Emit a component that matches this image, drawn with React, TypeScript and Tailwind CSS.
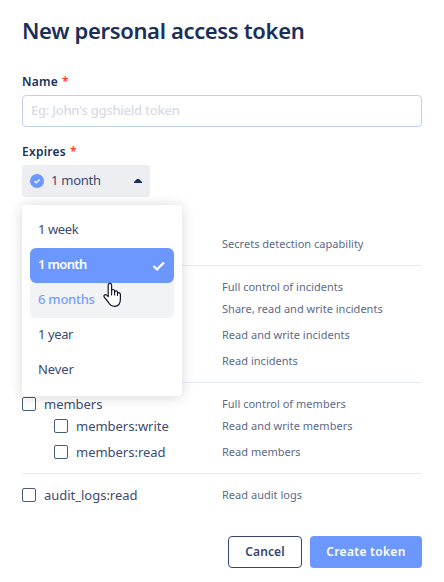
import React from "react";

type Scope = { name?: string; description: string; child?: boolean };

const sections: Scope[][] = [
  [{ description: "Secrets detection capability" }],
  [
    { description: "Full control of incidents" },
    { description: "Share, read and write incidents", child: true },
    { description: "Read and write incidents", child: true },
    { description: "Read incidents", child: true },
  ],
  [
    { name: "members", description: "Full control of members" },
    { name: "members:write", description: "Read and write members", child: true },
    { name: "members:read", description: "Read members", child: true },
  ],
  [{ name: "audit_logs:read", description: "Read audit logs" }],
];

function ScopeRow({ name, description, child }: Scope) {
  return (
    <div className={`flex items-center ${child ? "h-[26px] pl-8" : "h-[18px]"}`}>
      <div className={`flex items-center gap-2 ${child ? "w-[168px]" : "w-[200px]"}`}>
        {name && (
          <>
            <span className="size-[14px] shrink-0 rounded-[2px] border border-[#4a5a80] bg-white" />
            <span className="pb-px text-[13px] leading-[18px] tracking-[-0.02px] text-[#3c4b70]">{name}</span>
          </>
        )}
      </div>
      <span className="whitespace-nowrap text-[11px] leading-[18px] tracking-[0.02px] text-[#5d6a8a]">{description}</span>
    </div>
  );
}

function Option({ label, className = "" }: { label: string; className?: string }) {
  return (
    <div className={`flex h-[35px] items-center rounded-md px-2 pb-[2px] text-[13px] ${className}`}>
      {label}
    </div>
  );
}

function HandCursor() {
  return (
    <svg className="absolute left-[103px] top-[282px] z-20" width="19" height="26" viewBox="0 0 19 26">
      <path
        d="M5.2 14V3.2C5.2 .7 8.6 .7 8.6 3.2V9.5V8.3C9.4 7 11.6 7.3 11.6 9V9.6C12.4 8.4 14.5 8.8 14.5 10.4V11C15.7 10.2 17.4 11 17.4 12.6V17C17.4 21.5 15 24.3 11.5 24.3C8.5 24.3 6.8 23 5.2 20L1.3 15.2C.2 13.4 2.2 12 3.6 13.1L5.2 14.6Z"
        fill="#fff"
        stroke="#15152c"
        strokeWidth="1.2"
        strokeLinejoin="round"
      />
      <path d="M8.6 9V13M11.6 9.5V13M14.5 11V13.5" stroke="#15152c" strokeWidth="1.1" strokeLinecap="round" />
    </svg>
  );
}

export default function App() {
  return (
    <main className="relative h-[582px] w-[444px] overflow-hidden bg-white px-[22px] font-['Noto_Sans',sans-serif] text-[#1b2f59]">
      <h1 className="pt-[14px] text-[22px] leading-8 font-[560] tracking-[-0.34px] whitespace-nowrap">New personal access token</h1>
      <div className="mt-[27px] flex h-[18px] items-center gap-1 text-[12px] leading-[18px] font-semibold tracking-[0.2px]">
        Name <span className="font-semibold text-[#ff3b30]">*</span>
      </div>
      <div className="mt-1 flex h-8 items-center rounded-[4px] border border-[#c2cfee] px-2 text-[13px] font-medium tracking-[-0.25px] text-[#d7dbe3]">
        Eg: John's ggshield token
      </div>
      <div className="mt-4 flex h-[18px] items-center gap-1 text-[12px] leading-[18px] font-semibold tracking-[0.25px]">
        Expires <span className="font-semibold text-[#ff3b30]">*</span>
      </div>
      <div className="relative mt-1 flex h-8 w-32 items-center rounded-[3px] bg-[#edeef2] px-2">
        <svg width="14" height="14" viewBox="0 0 14 14">
          <circle cx="7" cy="7" r="7" fill="#6b97ff" />
          <path d="M4.4 7.1L6.2 8.8L9.6 5.5" fill="none" stroke="#fff" strokeWidth="1.3" />
        </svg>
        <span className="ml-[7px] text-[13px] tracking-[-0.25px] text-[#3c4b70]">1 month</span>
        <svg className="ml-auto" width="8" height="4" viewBox="0 0 8 4">
          <path d="M0 4V3L3 0H5L8 3V4Z" fill="#1b2f59" />
        </svg>
        <div className="absolute left-0 top-10 z-10 h-[191px] w-40 rounded-[4px] bg-white px-2 py-[8px] text-[#3c4b70] shadow-[0_1px_14px_rgba(0,0,0,0.16)]">
          <Option label="1 week" className="tracking-[-0.4px]" />
          <div className="relative z-10 flex h-[35px] items-center justify-between rounded-md bg-[#6b97ff] px-2 text-[13px] font-semibold tracking-[-0.65px] text-white">
            <span className="pb-[2px]">1 month</span>
            <svg className="mr-0" width="14" height="10" viewBox="0 0 14 10">
              <path d="M1.5 5L5 8.3L12 1.5" fill="none" stroke="#fff" strokeWidth="2.3" />
            </svg>
          </div>
          <Option label="6 months" className="rounded-t-none bg-[#f2f3f5] font-medium tracking-[-0.25px] text-[#769fff]" />
          <Option label="1 year" className="tracking-[-0.4px]" />
          <Option label="Never" className="tracking-[-0.1px]" />
        </div>
      </div>
      <div className="mt-[38px]">
        {sections.map((rows, i) => (
          <div
            key={i}
            className={`${i < 3 ? "border-b border-[#e6eaf4]" : ""} ${i > 0 ? "pt-3" : ""} ${rows.length > 1 ? "pb-2" : "pb-3"}`}
          >
            {rows.map((row) => (
              <ScopeRow key={row.description} {...row} />
            ))}
          </div>
        ))}
      </div>
      <div className="mt-5 flex justify-end gap-2 text-[12px] font-semibold">
        <button className="h-8 w-[74px] rounded-[4px] border border-[#33456f] tracking-[0.1px] text-[#33456f]">Cancel</button>
        <button className="h-8 w-28 rounded-[4px] bg-[#6b97ff] tracking-[0.3px] text-white">Create token</button>
      </div>
      <HandCursor />
    </main>
  );
}
